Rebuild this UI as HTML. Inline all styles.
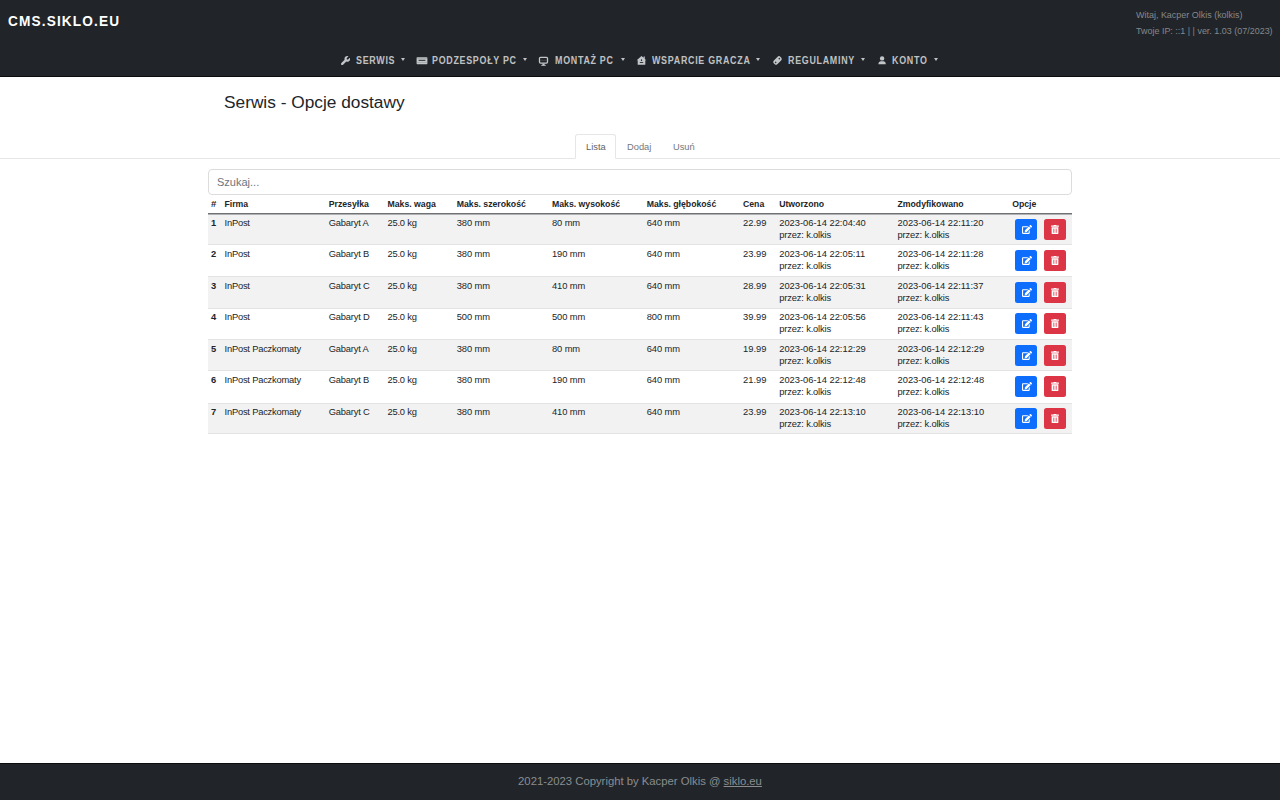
<!DOCTYPE html>
<html><head><meta charset="utf-8">
<style>
*{box-sizing:border-box;margin:0;padding:0}
html,body{width:1280px;height:800px;overflow:hidden;background:#fff;-webkit-font-smoothing:antialiased;font-family:"Liberation Sans",sans-serif;color:#212529}
.hdr{position:absolute;left:0;top:0;width:1280px;height:77px;background:#212529;border-bottom:1px solid #0a0c0e}
.brand{position:absolute;left:8px;top:11.5px;font-size:15.5px;font-weight:bold;color:#fff;letter-spacing:1.3px;white-space:nowrap;transform:scaleX(.88);transform-origin:0 0}
.who{position:absolute;left:1136px;top:6.7px;font-size:9.2px;color:#85888b;line-height:16px;white-space:nowrap;transform:scaleX(.975);transform-origin:0 0}
.nav{position:absolute;top:55px;left:0;height:14px;width:1280px;font-size:10px;font-weight:bold;color:#c0c1c3;letter-spacing:0.8px;white-space:nowrap}
.nav span{position:absolute;top:0;transform:scaleX(.89);transform-origin:0 0}
.nav svg{position:absolute}
.car{position:absolute;top:3px;width:0;height:0;border-top:3.3px solid #c0c1c3;border-left:2.7px solid transparent;border-right:2.7px solid transparent}
.title{position:absolute;left:224px;top:92px;font-size:17.3px;color:#212529;white-space:nowrap}
.tabline{position:absolute;left:0;top:158px;width:1280px;height:1px;background:#e6e6e6}
.tab{position:absolute;top:134px;height:25px;font-size:9.3px;color:#74787c;white-space:nowrap}
.tab.act{left:575px;width:41px;border:1px solid #e6e6e6;border-bottom:1px solid #fff;border-radius:3px 3px 0 0;background:#fff;color:#5f6368}
.search{position:absolute;left:208px;top:169px;width:864px;height:26px;border:1px solid #dcdcdc;border-radius:4px;font-size:11px;color:#6c757d;padding:6px 0 0 8px;white-space:nowrap}
.tbl{z-index:2;position:absolute;left:208px;top:196px;width:864px;height:240px;font-size:9.33px;color:#212529}
.h{position:absolute;top:3px;font-weight:bold;white-space:nowrap;font-size:8.7px}
.hline{position:absolute;left:0;top:17px;width:864px;height:1px;background:#6f7173;box-shadow:0 1px 0 #b0b1b2}
.row{position:absolute;left:208px;font-size:9.33px;color:#212529;width:864px;height:31.29px;border-bottom:1px solid #e3e3e3}
.c{position:absolute;top:2px;line-height:12px;white-space:nowrap}
.b{font-weight:bold}
.btn{position:absolute;top:4px;width:22px;height:21px;border-radius:2.5px;display:flex;align-items:center;justify-content:center}
.e{left:807px;background:#0d6efd}
.d{left:836px;background:#dc3545}
.foot{position:absolute;left:0;top:763px;width:1280px;height:37px;background:#212529;border-top:1px solid #0a0c0e}
.foot div{position:absolute;left:0;width:1280px;top:11px;text-align:center;font-size:11.3px;color:#8a8d90}
</style></head><body>
<div class="hdr">
 <div class="brand">CMS.SIKLO.EU</div>
 <div class="who">Witaj, Kacper Olkis (kolkis)<br>Twoje IP: ::1 | | ver. 1.03 (07/2023)</div>
 <div class="nav">
  <span style="left:356px">SERWIS</span>
  <span style="left:432px">PODZESPOŁY PC</span>
  <span style="left:555px">MONTAŻ PC</span>
  <span style="left:652px">WSPARCIE GRACZA</span>
  <span style="left:788px">REGULAMINY</span>
  <span style="left:892px">KONTO</span>
  <svg style="left:341px;top:0.8px" width="9.2" height="9.2" viewBox="0 0 512 512"><path fill="#c3c6c9" d="M352 320c88.4 0 160-71.6 160-160c0-15.3-2.2-30.1-6.2-44.2c-3.1-10.8-16.4-13.2-24.3-5.3l-76.8 76.8c-3 3-7.1 4.7-11.3 4.7H336c-8.8 0-16-7.2-16-16V118.6c0-4.2 1.7-8.3 4.7-11.3l76.8-76.8c7.9-7.9 5.4-21.2-5.3-24.3C382.1 2.2 367.3 0 352 0C263.6 0 192 71.6 192 160c0 19.1 3.4 37.5 9.5 54.5L19.9 396.1C7.2 408.8 0 426.1 0 444.1C0 481.6 30.4 512 67.9 512c18 0 35.3-7.2 48-19.9L297.5 310.5c17 6.2 35.4 9.5 54.5 9.5z"/></svg><svg style="left:416px;top:1.5px" width="12" height="8" viewBox="0 0 12 8"><rect x="0.6" y="0.3" width="10.8" height="6.9" rx="0.6" fill="#c3c6c9"/><rect x="2.6" y="2.8" width="6.8" height="1.1" fill="#33363a"/><rect x="1" y="5" width="10" height="0.45" fill="#8d9093"/><rect x="1" y="1.5" width="10" height="0.45" fill="#8d9093"/></svg><svg style="left:538px;top:0.5px" width="11" height="11" viewBox="0 0 11 11"><rect x="1.5" y="1.3" width="8" height="5.8" rx="1" fill="none" stroke="#c3c6c9" stroke-width="1.3"/><rect x="2.4" y="3.9" width="6.2" height="0.6" fill="#55585b"/><rect x="4.4" y="7.6" width="2.2" height="1.6" fill="#c3c6c9"/><rect x="3.3" y="8.9" width="4.4" height="0.9" fill="#c3c6c9"/></svg><svg style="left:636px;top:0" width="11" height="11" viewBox="0 0 11 11"><path fill="#c3c6c9" d="M5.5 1L7.6 2.8V1.6H8.8V3.9L10.3 5.3H9.3V9.8H1.7V5.3H0.7Z"/><rect x="4.9" y="4.3" width="1.2" height="1.8" rx="0.6" fill="#26292c"/><rect x="3.8" y="7" width="3.4" height="0.9" fill="#26292c"/></svg><svg style="left:771.7px;top:0px" width="11" height="11" viewBox="0 0 11 11"><g transform="rotate(-45 5.5 5.5)"><rect x="0.8" y="2.9" width="9.4" height="5.2" rx="2.2" fill="#c3c6c9"/><circle cx="2.9" cy="5.5" r="0.8" fill="#34373a"/><circle cx="8.1" cy="5.5" r="0.8" fill="#34373a"/></g></svg><svg style="left:876.7px;top:0px" width="10" height="11" viewBox="0 0 10 11"><circle cx="5.1" cy="3.4" r="2.2" fill="#c3c6c9"/><path fill="#c3c6c9" d="M1.4 9.3C1.4 7.2 2.5 6.3 3.9 6.3H6.3C7.7 6.3 8.8 7.2 8.8 9.3Z"/></svg><i class="car" style="left:401px"></i><i class="car" style="left:523px"></i><i class="car" style="left:621px"></i><i class="car" style="left:756px"></i><i class="car" style="left:861px"></i><i class="car" style="left:934px"></i>
 </div>
</div>
<div class="title">Serwis - Opcje dostawy</div>
<div class="tabline"></div>
<div class="tab act"><span style="position:absolute;left:10px;top:7px">Lista</span></div>
<div class="tab" style="left:627px"><span style="position:absolute;left:0;top:8px">Dodaj</span></div>
<div class="tab" style="left:673px"><span style="position:absolute;left:0;top:8px">Usuń</span></div>
<div class="search">Szukaj...</div>
<div class="tbl"><div class="h" style="left:3px;font-size:9.6px;top:2.3px">#</div><div class="h" style="left:16.5px">Firma</div><div class="h" style="left:120.75px">Przesyłka</div><div class="h" style="left:179.5px">Maks. waga</div><div class="h" style="left:248.75px">Maks. szerokość</div><div class="h" style="left:344px">Maks. wysokość</div><div class="h" style="left:438.75px">Maks. głębokość</div><div class="h" style="left:535px">Cena</div><div class="h" style="left:571.2px">Utworzono</div><div class="h" style="left:689.5px">Zmodyfikowano</div><div class="h" style="left:804.2px">Opcje</div><div class="hline"></div></div>
<div class="row" style="top:215px;height:30px;background:#f2f2f2"><div class="c b" style="left:3px;top:2px;letter-spacing:0px">1</div><div class="c" style="left:16.5px;top:2px;letter-spacing:-0.2px">InPost</div><div class="c" style="left:120.75px;top:2px;letter-spacing:-0.2px">Gabaryt A</div><div class="c" style="left:179.5px;top:2px;letter-spacing:-0.2px">25.0 kg</div><div class="c" style="left:248.75px;top:2px;letter-spacing:-0.1px">380 mm</div><div class="c" style="left:344px;top:2px;letter-spacing:-0.1px">80 mm</div><div class="c" style="left:438.75px;top:2px;letter-spacing:-0.1px">640 mm</div><div class="c" style="left:535px;top:2px;letter-spacing:0px">22.99</div><div class="c" style="left:571.2px;top:2px">2023-06-14 22:04:40<br><span style="letter-spacing:-.15px">przez: k.olkis</span></div><div class="c" style="left:689.5px;top:2px">2023-06-14 22:11:20<br><span style="letter-spacing:-.15px">przez: k.olkis</span></div><div class="btn e" style="top:4px"><svg width="10" height="9" viewBox="0 0 576 512" style="margin-left:1px"><path fill="#fff" d="M402.6 83.2l90.2 90.2c3.8 3.8 3.8 10 0 13.8L274.4 405.6l-92.8 10.3c-12.4 1.4-22.9-9.1-21.5-21.5l10.3-92.8L388.8 83.2c3.8-3.8 10-3.8 13.8 0zm162-22.9l-48.8-48.8c-15.2-15.2-39.9-15.2-55.2 0l-35.4 35.4c-3.8 3.8-3.8 10 0 13.8l90.2 90.2c3.8 3.8 10 3.8 13.8 0l35.4-35.4c15.2-15.300 15.2-40 0-55.2zM384 346.2V448H64V128h229.8c3.2 0 6.2-1.3 8.5-3.5l40-40c7.6-7.6 2.2-20.5-8.5-20.5H48C21.5 64 0 85.5 0 112v352c0 26.5 21.5 48 48 48h352c26.5 0 48-21.5 48-48V306.2c0-10.7-12.9-16-20.5-8.5l-40 40c-2.2 2.3-3.5 5.3-3.5 8.5z"/></svg></div><div class="btn d" style="top:4px"><svg width="8" height="9" viewBox="0 0 448 512"><path fill="#fff" d="M32 464a48 48 0 0 0 48 48h288a48 48 0 0 0 48-48V128H32zm272-256a16 16 0 0 1 32 0v224a16 16 0 0 1-32 0zm-96 0a16 16 0 0 1 32 0v224a16 16 0 0 1-32 0zm-96 0a16 16 0 0 1 32 0v224a16 16 0 0 1-32 0zM432 32H312l-9.4-18.7A24 24 0 0 0 281.1 0H166.8a23.72 23.72 0 0 0-21.4 13.3L136 32H16A16 16 0 0 0 0 48v32a16 16 0 0 0 16 16h416a16 16 0 0 0 16-16V48a16 16 0 0 0-16-16z"/></svg></div></div><div class="row" style="top:245px;height:32px;background:#fff"><div class="c b" style="left:3px;top:3.45px;letter-spacing:0px">2</div><div class="c" style="left:16.5px;top:3.45px;letter-spacing:-0.2px">InPost</div><div class="c" style="left:120.75px;top:3.45px;letter-spacing:-0.2px">Gabaryt B</div><div class="c" style="left:179.5px;top:3.45px;letter-spacing:-0.2px">25.0 kg</div><div class="c" style="left:248.75px;top:3.45px;letter-spacing:-0.1px">380 mm</div><div class="c" style="left:344px;top:3.45px;letter-spacing:-0.1px">190 mm</div><div class="c" style="left:438.75px;top:3.45px;letter-spacing:-0.1px">640 mm</div><div class="c" style="left:535px;top:3.45px;letter-spacing:0px">23.99</div><div class="c" style="left:571.2px;top:3.45px">2023-06-14 22:05:11<br><span style="letter-spacing:-.15px">przez: k.olkis</span></div><div class="c" style="left:689.5px;top:3.45px">2023-06-14 22:11:28<br><span style="letter-spacing:-.15px">przez: k.olkis</span></div><div class="btn e" style="top:5.45px"><svg width="10" height="9" viewBox="0 0 576 512" style="margin-left:1px"><path fill="#fff" d="M402.6 83.2l90.2 90.2c3.8 3.8 3.8 10 0 13.8L274.4 405.6l-92.8 10.3c-12.4 1.4-22.9-9.1-21.5-21.5l10.3-92.8L388.8 83.2c3.8-3.8 10-3.8 13.8 0zm162-22.9l-48.8-48.8c-15.2-15.2-39.9-15.2-55.2 0l-35.4 35.4c-3.8 3.8-3.8 10 0 13.8l90.2 90.2c3.8 3.8 10 3.8 13.8 0l35.4-35.4c15.2-15.300 15.2-40 0-55.2zM384 346.2V448H64V128h229.8c3.2 0 6.2-1.3 8.5-3.5l40-40c7.6-7.6 2.2-20.5-8.5-20.5H48C21.5 64 0 85.5 0 112v352c0 26.5 21.5 48 48 48h352c26.5 0 48-21.5 48-48V306.2c0-10.7-12.9-16-20.5-8.5l-40 40c-2.2 2.3-3.5 5.3-3.5 8.5z"/></svg></div><div class="btn d" style="top:5.45px"><svg width="8" height="9" viewBox="0 0 448 512"><path fill="#fff" d="M32 464a48 48 0 0 0 48 48h288a48 48 0 0 0 48-48V128H32zm272-256a16 16 0 0 1 32 0v224a16 16 0 0 1-32 0zm-96 0a16 16 0 0 1 32 0v224a16 16 0 0 1-32 0zm-96 0a16 16 0 0 1 32 0v224a16 16 0 0 1-32 0zM432 32H312l-9.4-18.7A24 24 0 0 0 281.1 0H166.8a23.72 23.72 0 0 0-21.4 13.3L136 32H16A16 16 0 0 0 0 48v32a16 16 0 0 0 16 16h416a16 16 0 0 0 16-16V48a16 16 0 0 0-16-16z"/></svg></div></div><div class="row" style="top:277px;height:32px;background:#f2f2f2"><div class="c b" style="left:3px;top:2.9px;letter-spacing:0px">3</div><div class="c" style="left:16.5px;top:2.9px;letter-spacing:-0.2px">InPost</div><div class="c" style="left:120.75px;top:2.9px;letter-spacing:-0.2px">Gabaryt C</div><div class="c" style="left:179.5px;top:2.9px;letter-spacing:-0.2px">25.0 kg</div><div class="c" style="left:248.75px;top:2.9px;letter-spacing:-0.1px">380 mm</div><div class="c" style="left:344px;top:2.9px;letter-spacing:-0.1px">410 mm</div><div class="c" style="left:438.75px;top:2.9px;letter-spacing:-0.1px">640 mm</div><div class="c" style="left:535px;top:2.9px;letter-spacing:0px">28.99</div><div class="c" style="left:571.2px;top:2.9px">2023-06-14 22:05:31<br><span style="letter-spacing:-.15px">przez: k.olkis</span></div><div class="c" style="left:689.5px;top:2.9px">2023-06-14 22:11:37<br><span style="letter-spacing:-.15px">przez: k.olkis</span></div><div class="btn e" style="top:4.9px"><svg width="10" height="9" viewBox="0 0 576 512" style="margin-left:1px"><path fill="#fff" d="M402.6 83.2l90.2 90.2c3.8 3.8 3.8 10 0 13.8L274.4 405.6l-92.8 10.3c-12.4 1.4-22.9-9.1-21.5-21.5l10.3-92.8L388.8 83.2c3.8-3.8 10-3.8 13.8 0zm162-22.9l-48.8-48.8c-15.2-15.2-39.9-15.2-55.2 0l-35.4 35.4c-3.8 3.8-3.8 10 0 13.8l90.2 90.2c3.8 3.8 10 3.8 13.8 0l35.4-35.4c15.2-15.300 15.2-40 0-55.2zM384 346.2V448H64V128h229.8c3.2 0 6.2-1.3 8.5-3.5l40-40c7.6-7.6 2.2-20.5-8.5-20.5H48C21.5 64 0 85.5 0 112v352c0 26.5 21.5 48 48 48h352c26.5 0 48-21.5 48-48V306.2c0-10.7-12.9-16-20.5-8.5l-40 40c-2.2 2.3-3.5 5.3-3.5 8.5z"/></svg></div><div class="btn d" style="top:4.9px"><svg width="8" height="9" viewBox="0 0 448 512"><path fill="#fff" d="M32 464a48 48 0 0 0 48 48h288a48 48 0 0 0 48-48V128H32zm272-256a16 16 0 0 1 32 0v224a16 16 0 0 1-32 0zm-96 0a16 16 0 0 1 32 0v224a16 16 0 0 1-32 0zm-96 0a16 16 0 0 1 32 0v224a16 16 0 0 1-32 0zM432 32H312l-9.4-18.7A24 24 0 0 0 281.1 0H166.8a23.72 23.72 0 0 0-21.4 13.3L136 32H16A16 16 0 0 0 0 48v32a16 16 0 0 0 16 16h416a16 16 0 0 0 16-16V48a16 16 0 0 0-16-16z"/></svg></div></div><div class="row" style="top:309px;height:31px;background:#fff"><div class="c b" style="left:3px;top:2.35px;letter-spacing:0px">4</div><div class="c" style="left:16.5px;top:2.35px;letter-spacing:-0.2px">InPost</div><div class="c" style="left:120.75px;top:2.35px;letter-spacing:-0.2px">Gabaryt D</div><div class="c" style="left:179.5px;top:2.35px;letter-spacing:-0.2px">25.0 kg</div><div class="c" style="left:248.75px;top:2.35px;letter-spacing:-0.1px">500 mm</div><div class="c" style="left:344px;top:2.35px;letter-spacing:-0.1px">500 mm</div><div class="c" style="left:438.75px;top:2.35px;letter-spacing:-0.1px">800 mm</div><div class="c" style="left:535px;top:2.35px;letter-spacing:0px">39.99</div><div class="c" style="left:571.2px;top:2.35px">2023-06-14 22:05:56<br><span style="letter-spacing:-.15px">przez: k.olkis</span></div><div class="c" style="left:689.5px;top:2.35px">2023-06-14 22:11:43<br><span style="letter-spacing:-.15px">przez: k.olkis</span></div><div class="btn e" style="top:4.35px"><svg width="10" height="9" viewBox="0 0 576 512" style="margin-left:1px"><path fill="#fff" d="M402.6 83.2l90.2 90.2c3.8 3.8 3.8 10 0 13.8L274.4 405.6l-92.8 10.3c-12.4 1.4-22.9-9.1-21.5-21.5l10.3-92.8L388.8 83.2c3.8-3.8 10-3.8 13.8 0zm162-22.9l-48.8-48.8c-15.2-15.2-39.9-15.2-55.2 0l-35.4 35.4c-3.8 3.8-3.8 10 0 13.8l90.2 90.2c3.8 3.8 10 3.8 13.8 0l35.4-35.4c15.2-15.300 15.2-40 0-55.2zM384 346.2V448H64V128h229.8c3.2 0 6.2-1.3 8.5-3.5l40-40c7.6-7.6 2.2-20.5-8.5-20.5H48C21.5 64 0 85.5 0 112v352c0 26.5 21.5 48 48 48h352c26.5 0 48-21.5 48-48V306.2c0-10.7-12.9-16-20.5-8.5l-40 40c-2.2 2.3-3.5 5.3-3.5 8.5z"/></svg></div><div class="btn d" style="top:4.35px"><svg width="8" height="9" viewBox="0 0 448 512"><path fill="#fff" d="M32 464a48 48 0 0 0 48 48h288a48 48 0 0 0 48-48V128H32zm272-256a16 16 0 0 1 32 0v224a16 16 0 0 1-32 0zm-96 0a16 16 0 0 1 32 0v224a16 16 0 0 1-32 0zm-96 0a16 16 0 0 1 32 0v224a16 16 0 0 1-32 0zM432 32H312l-9.4-18.7A24 24 0 0 0 281.1 0H166.8a23.72 23.72 0 0 0-21.4 13.3L136 32H16A16 16 0 0 0 0 48v32a16 16 0 0 0 16 16h416a16 16 0 0 0 16-16V48a16 16 0 0 0-16-16z"/></svg></div></div><div class="row" style="top:340px;height:31px;background:#f2f2f2"><div class="c b" style="left:3px;top:2.8px;letter-spacing:0px">5</div><div class="c" style="left:16.5px;top:2.8px;letter-spacing:-0.2px">InPost Paczkomaty</div><div class="c" style="left:120.75px;top:2.8px;letter-spacing:-0.2px">Gabaryt A</div><div class="c" style="left:179.5px;top:2.8px;letter-spacing:-0.2px">25.0 kg</div><div class="c" style="left:248.75px;top:2.8px;letter-spacing:-0.1px">380 mm</div><div class="c" style="left:344px;top:2.8px;letter-spacing:-0.1px">80 mm</div><div class="c" style="left:438.75px;top:2.8px;letter-spacing:-0.1px">640 mm</div><div class="c" style="left:535px;top:2.8px;letter-spacing:0px">19.99</div><div class="c" style="left:571.2px;top:2.8px">2023-06-14 22:12:29<br><span style="letter-spacing:-.15px">przez: k.olkis</span></div><div class="c" style="left:689.5px;top:2.8px">2023-06-14 22:12:29<br><span style="letter-spacing:-.15px">przez: k.olkis</span></div><div class="btn e" style="top:4.8px"><svg width="10" height="9" viewBox="0 0 576 512" style="margin-left:1px"><path fill="#fff" d="M402.6 83.2l90.2 90.2c3.8 3.8 3.8 10 0 13.8L274.4 405.6l-92.8 10.3c-12.4 1.4-22.9-9.1-21.5-21.5l10.3-92.8L388.8 83.2c3.8-3.8 10-3.8 13.8 0zm162-22.9l-48.8-48.8c-15.2-15.2-39.9-15.2-55.2 0l-35.4 35.4c-3.8 3.8-3.8 10 0 13.8l90.2 90.2c3.8 3.8 10 3.8 13.8 0l35.4-35.4c15.2-15.300 15.2-40 0-55.2zM384 346.2V448H64V128h229.8c3.2 0 6.2-1.3 8.5-3.5l40-40c7.6-7.6 2.2-20.5-8.5-20.5H48C21.5 64 0 85.5 0 112v352c0 26.5 21.5 48 48 48h352c26.5 0 48-21.5 48-48V306.2c0-10.7-12.9-16-20.5-8.5l-40 40c-2.2 2.3-3.5 5.3-3.5 8.5z"/></svg></div><div class="btn d" style="top:4.8px"><svg width="8" height="9" viewBox="0 0 448 512"><path fill="#fff" d="M32 464a48 48 0 0 0 48 48h288a48 48 0 0 0 48-48V128H32zm272-256a16 16 0 0 1 32 0v224a16 16 0 0 1-32 0zm-96 0a16 16 0 0 1 32 0v224a16 16 0 0 1-32 0zm-96 0a16 16 0 0 1 32 0v224a16 16 0 0 1-32 0zM432 32H312l-9.4-18.7A24 24 0 0 0 281.1 0H166.8a23.72 23.72 0 0 0-21.4 13.3L136 32H16A16 16 0 0 0 0 48v32a16 16 0 0 0 16 16h416a16 16 0 0 0 16-16V48a16 16 0 0 0-16-16z"/></svg></div></div><div class="row" style="top:371px;height:33px;background:#fff"><div class="c b" style="left:3px;top:3.25px;letter-spacing:0px">6</div><div class="c" style="left:16.5px;top:3.25px;letter-spacing:-0.2px">InPost Paczkomaty</div><div class="c" style="left:120.75px;top:3.25px;letter-spacing:-0.2px">Gabaryt B</div><div class="c" style="left:179.5px;top:3.25px;letter-spacing:-0.2px">25.0 kg</div><div class="c" style="left:248.75px;top:3.25px;letter-spacing:-0.1px">380 mm</div><div class="c" style="left:344px;top:3.25px;letter-spacing:-0.1px">190 mm</div><div class="c" style="left:438.75px;top:3.25px;letter-spacing:-0.1px">640 mm</div><div class="c" style="left:535px;top:3.25px;letter-spacing:0px">21.99</div><div class="c" style="left:571.2px;top:3.25px">2023-06-14 22:12:48<br><span style="letter-spacing:-.15px">przez: k.olkis</span></div><div class="c" style="left:689.5px;top:3.25px">2023-06-14 22:12:48<br><span style="letter-spacing:-.15px">przez: k.olkis</span></div><div class="btn e" style="top:5.25px"><svg width="10" height="9" viewBox="0 0 576 512" style="margin-left:1px"><path fill="#fff" d="M402.6 83.2l90.2 90.2c3.8 3.8 3.8 10 0 13.8L274.4 405.6l-92.8 10.3c-12.4 1.4-22.9-9.1-21.5-21.5l10.3-92.8L388.8 83.2c3.8-3.8 10-3.8 13.8 0zm162-22.9l-48.8-48.8c-15.2-15.2-39.9-15.2-55.2 0l-35.4 35.4c-3.8 3.8-3.8 10 0 13.8l90.2 90.2c3.8 3.8 10 3.8 13.8 0l35.4-35.4c15.2-15.300 15.2-40 0-55.2zM384 346.2V448H64V128h229.8c3.2 0 6.2-1.3 8.5-3.5l40-40c7.6-7.6 2.2-20.5-8.5-20.5H48C21.5 64 0 85.5 0 112v352c0 26.5 21.5 48 48 48h352c26.5 0 48-21.5 48-48V306.2c0-10.7-12.9-16-20.5-8.5l-40 40c-2.2 2.3-3.5 5.3-3.5 8.5z"/></svg></div><div class="btn d" style="top:5.25px"><svg width="8" height="9" viewBox="0 0 448 512"><path fill="#fff" d="M32 464a48 48 0 0 0 48 48h288a48 48 0 0 0 48-48V128H32zm272-256a16 16 0 0 1 32 0v224a16 16 0 0 1-32 0zm-96 0a16 16 0 0 1 32 0v224a16 16 0 0 1-32 0zm-96 0a16 16 0 0 1 32 0v224a16 16 0 0 1-32 0zM432 32H312l-9.4-18.7A24 24 0 0 0 281.1 0H166.8a23.72 23.72 0 0 0-21.4 13.3L136 32H16A16 16 0 0 0 0 48v32a16 16 0 0 0 16 16h416a16 16 0 0 0 16-16V48a16 16 0 0 0-16-16z"/></svg></div></div><div class="row" style="top:404px;height:30px;background:#f2f2f2"><div class="c b" style="left:3px;top:1.7px;letter-spacing:0px">7</div><div class="c" style="left:16.5px;top:1.7px;letter-spacing:-0.2px">InPost Paczkomaty</div><div class="c" style="left:120.75px;top:1.7px;letter-spacing:-0.2px">Gabaryt C</div><div class="c" style="left:179.5px;top:1.7px;letter-spacing:-0.2px">25.0 kg</div><div class="c" style="left:248.75px;top:1.7px;letter-spacing:-0.1px">380 mm</div><div class="c" style="left:344px;top:1.7px;letter-spacing:-0.1px">410 mm</div><div class="c" style="left:438.75px;top:1.7px;letter-spacing:-0.1px">640 mm</div><div class="c" style="left:535px;top:1.7px;letter-spacing:0px">23.99</div><div class="c" style="left:571.2px;top:1.7px">2023-06-14 22:13:10<br><span style="letter-spacing:-.15px">przez: k.olkis</span></div><div class="c" style="left:689.5px;top:1.7px">2023-06-14 22:13:10<br><span style="letter-spacing:-.15px">przez: k.olkis</span></div><div class="btn e" style="top:3.7px"><svg width="10" height="9" viewBox="0 0 576 512" style="margin-left:1px"><path fill="#fff" d="M402.6 83.2l90.2 90.2c3.8 3.8 3.8 10 0 13.8L274.4 405.6l-92.8 10.3c-12.4 1.4-22.9-9.1-21.5-21.5l10.3-92.8L388.8 83.2c3.8-3.8 10-3.8 13.8 0zm162-22.9l-48.8-48.8c-15.2-15.2-39.9-15.2-55.2 0l-35.4 35.4c-3.8 3.8-3.8 10 0 13.8l90.2 90.2c3.8 3.8 10 3.8 13.8 0l35.4-35.4c15.2-15.300 15.2-40 0-55.2zM384 346.2V448H64V128h229.8c3.2 0 6.2-1.3 8.5-3.5l40-40c7.6-7.6 2.2-20.5-8.5-20.5H48C21.5 64 0 85.5 0 112v352c0 26.5 21.5 48 48 48h352c26.5 0 48-21.5 48-48V306.2c0-10.7-12.9-16-20.5-8.5l-40 40c-2.2 2.3-3.5 5.3-3.5 8.5z"/></svg></div><div class="btn d" style="top:3.7px"><svg width="8" height="9" viewBox="0 0 448 512"><path fill="#fff" d="M32 464a48 48 0 0 0 48 48h288a48 48 0 0 0 48-48V128H32zm272-256a16 16 0 0 1 32 0v224a16 16 0 0 1-32 0zm-96 0a16 16 0 0 1 32 0v224a16 16 0 0 1-32 0zm-96 0a16 16 0 0 1 32 0v224a16 16 0 0 1-32 0zM432 32H312l-9.4-18.7A24 24 0 0 0 281.1 0H166.8a23.72 23.72 0 0 0-21.4 13.3L136 32H16A16 16 0 0 0 0 48v32a16 16 0 0 0 16 16h416a16 16 0 0 0 16-16V48a16 16 0 0 0-16-16z"/></svg></div></div>
<div class="foot"><div>2021-2023 Copyright by Kacper Olkis @ <u>siklo.eu</u></div></div>
</body></html>
